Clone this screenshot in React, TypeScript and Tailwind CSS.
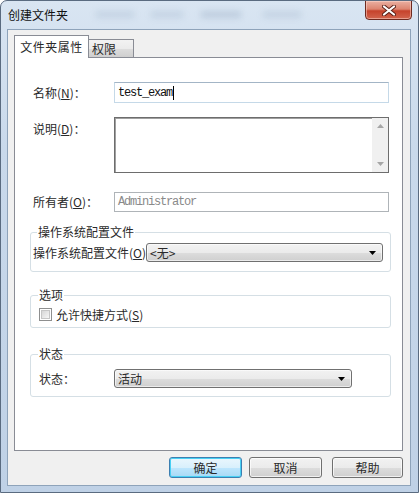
import React from "react";

function Arrow() {
  return (
    <svg width="7" height="4" viewBox="0 0 7 4" className="block">
      <path d="M0 0H7L3.5 4Z" fill="#000" />
    </svg>
  );
}

function Select({ text, w }: { text: string; w: string }) {
  return (
    <div
      className={`${w} flex h-[19px] items-center justify-between rounded-[3px] border border-[#707070] bg-[linear-gradient(180deg,#f2f2f2_0%,#ebebeb_50%,#dddddd_51%,#cfcfcf_100%)] pl-[3px] pr-[6px] shadow-[inset_0_0_0_1px_rgba(255,255,255,0.6)]`}
    >
      <span className="text-[12px] leading-none text-[#2a2a2a]">{text}</span>
      <Arrow />
    </div>
  );
}

function Button({ children, w, primary }: { children: React.ReactNode; w: string; primary?: boolean }) {
  return (
    <div
      className={`${w} flex h-[21px] items-center justify-center rounded-[3px] border text-[12px] leading-none text-[#2a2a2a] ${
        primary
          ? "border-[#3c7fb1] bg-[linear-gradient(180deg,#eaf6fd_0%,#d9f0fc_50%,#bee6fd_51%,#a7d9f5_100%)] shadow-[inset_0_0_0_1px_#48d0f4]"
          : "border-[#707070] bg-[linear-gradient(180deg,#f2f2f2_0%,#ebebeb_50%,#dddddd_51%,#cfcfcf_100%)] shadow-[inset_0_0_0_1px_rgba(255,255,255,0.7)]"
      }`}
    >
      {children}
    </div>
  );
}

export default function App() {
  return (
    <div className="flex h-[493px] w-[419px] flex-col overflow-hidden rounded-t-[7px] border border-[#5a6b80] bg-[linear-gradient(180deg,#d9e5f2_0%,#c9d9eb_30%,#bfd1e6_100%)] font-['Noto_Sans_CJK_SC',sans-serif] text-[#2a2a2a]">
      {/* title bar */}
      <div className="relative flex h-[28px] items-center pl-[7px]">
        <div className="absolute left-[95px] top-[10px] h-[7px] w-[38px] bg-[#a9bcd1] opacity-40 blur-[3px]" />
        <div className="absolute left-[150px] top-[10px] h-[7px] w-[32px] bg-[#a9bcd1] opacity-40 blur-[3px]" />
        <div className="absolute left-[200px] top-[10px] h-[7px] w-[40px] bg-[#98acc3] opacity-40 blur-[3px]" />
        <div className="absolute left-[262px] top-[10px] h-[7px] w-[38px] bg-[#a9bcd1] opacity-40 blur-[3px]" />
        <span className="relative text-[12px] leading-none text-[#111]">创建文件夹</span>
        <div className="absolute left-[364px] top-[-1px] flex h-[20px] w-[47px] items-center justify-center rounded-b-[4px] border border-[#6e2a20] bg-[linear-gradient(180deg,#eab0a2_0%,#dc8470_45%,#c6432c_55%,#d2654e_100%)] shadow-[inset_0_0_0_1px_rgba(255,220,210,0.5)]">
          <svg width="14" height="11" viewBox="0 0 14 11">
            <path d="M2 1.5 L12 9.5 M12 1.5 L2 9.5" stroke="#5a2018" strokeWidth="4" strokeLinecap="round" />
            <path d="M2 1.5 L12 9.5 M12 1.5 L2 9.5" stroke="#ffffff" strokeWidth="2.2" strokeLinecap="round" />
          </svg>
        </div>
      </div>

      {/* client area */}
      <div className="ml-[6px] flex h-[457px] w-[404px] flex-col border border-[#8ea3ba] bg-[#f0f0f0] pl-[6px] pt-[5px]">
        {/* tabs */}
        <div className="flex h-[22px] items-start">
          <div className="relative z-10 flex h-[23px] w-[75px] items-center justify-center border border-b-0 border-[#898c95] bg-white text-[12px] leading-none tracking-[0.5px]">
            文件夹属性
          </div>
          <div className="mt-[4px] flex h-[18px] w-[45px] items-center border border-b-0 border-l-0 border-[#898c95] bg-[linear-gradient(180deg,#f2f2f2_0%,#ebebeb_50%,#dddddd_51%,#cfcfcf_100%)] pl-[3px] text-[12px] leading-none">
            权限
          </div>
        </div>

        {/* panel */}
        <div className="flex h-[394px] w-[389px] flex-col border border-[#898c95] bg-white">
          {/* name */}
          <div className="mt-[24px] flex h-[21px] items-center pl-[18px]">
            <span className="w-[81px] text-[12px] leading-none">
              名称(<span className="underline">N</span>)：
            </span>
            <div className="flex h-[21px] w-[275px] items-center border border-[#c5d9e8] border-t-[#a3b5c6] bg-white pl-[3px]">
              <span className="font-['Liberation_Mono',monospace] text-[12px] leading-none tracking-[-1.2px] text-[#111]">
                test_exam
              </span>
              <span className="ml-[1px] h-[14px] w-[1px] bg-black" />
            </div>
          </div>

          {/* description */}
          <div className="mt-[14px] flex items-start pl-[18px]">
            <span className="w-[81px] pt-[6px] text-[12px] leading-none">
              说明(<span className="underline">D</span>)：
            </span>
            <div className="flex h-[56px] w-[275px] border border-[#6d6d6d] bg-white shadow-[inset_1px_1px_0_#a0a0a0]">
              <div className="flex-1" />
              <div className="flex w-[16px] flex-col items-center justify-between bg-[#f0f0f0] py-[6px]">
                <svg width="7" height="4" viewBox="0 0 7 4">
                  <path d="M0 4H7L3.5 0Z" fill="#a6a6a6" />
                </svg>
                <svg width="7" height="4" viewBox="0 0 7 4">
                  <path d="M0 0H7L3.5 4Z" fill="#a6a6a6" />
                </svg>
              </div>
            </div>
          </div>

          {/* owner */}
          <div className="mt-[19px] flex h-[20px] items-center pl-[18px]">
            <span className="w-[81px] text-[12px] leading-none">
              所有者(<span className="underline">O</span>)：
            </span>
            <div className="flex h-[20px] w-[275px] items-center border border-[#afb4b8] bg-white pl-[3px]">
              <span className="font-['Liberation_Mono',monospace] text-[12px] leading-none tracking-[-1.2px] text-[#8a8a8a]">
                Administrator
              </span>
            </div>
          </div>

          {/* group: OS profile */}
          <div className="relative ml-[15px] mt-[20px] flex h-[40px] w-[361px] items-start rounded-[3px] border border-[#d5dfe5] pl-[2px] pt-[10px]">
            <span className="absolute left-[6px] top-[-8px] bg-white px-[1px] text-[12px] leading-[14px]">
              操作系统配置文件
            </span>
            <span className="w-[113px] overflow-hidden whitespace-nowrap text-[12px] leading-[19px]">
              操作系统配置文件(<span className="underline">O</span>)
            </span>
            <Select text="<无>" w="w-[237px]" />
          </div>

          {/* group: options */}
          <div className="relative ml-[15px] mt-[23px] flex h-[33px] w-[361px] items-start rounded-[3px] border border-[#d5dfe5] pl-[8px] pt-[12px]">
            <span className="absolute left-[7px] top-[-8px] bg-white px-[1px] text-[12px] leading-[14px]">选项</span>
            <div className="flex h-[13px] w-[13px] items-center justify-center border border-[#8e8f8f] bg-white">
              <div className="h-[9px] w-[9px] border border-[#c6c6c6] bg-[linear-gradient(135deg,#d7d7d7_0%,#f6f6f6_100%)]" />
            </div>
            <span className="ml-[4px] text-[12px] leading-[13px]">
              允许快捷方式(<span className="underline">S</span>)
            </span>
          </div>

          {/* group: status */}
          <div className="relative ml-[15px] mt-[26px] flex h-[43px] w-[361px] items-start rounded-[3px] border border-[#d5dfe5] pl-[8px] pt-[14px]">
            <span className="absolute left-[7px] top-[-8px] bg-white px-[1px] text-[12px] leading-[14px]">状态</span>
            <span className="w-[75px] text-[12px] leading-[19px]">状态：</span>
            <Select text="活动" w="w-[238px]" />
          </div>
        </div>

        {/* buttons */}
        <div className="mt-[6px] flex w-[389px] justify-end">
          <Button w="w-[73px]" primary>
            确定
          </Button>
          <div className="w-[7px]" />
          <Button w="w-[73px]">取消</Button>
          <div className="w-[10px]" />
          <Button w="w-[71px]">帮助</Button>
        </div>
      </div>
    </div>
  );
}
